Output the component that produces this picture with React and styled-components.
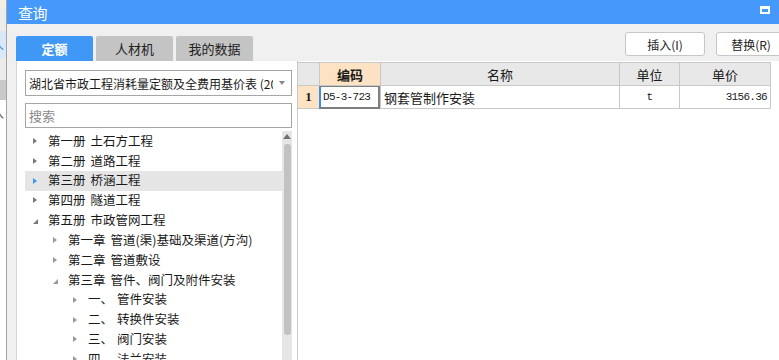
import React from 'react';
import styled, { createGlobalStyle, css } from 'styled-components';

const Global = createGlobalStyle`
  html, body {
    margin: 0;
    padding: 0;
    width: 779px;
    height: 360px;
    overflow: hidden;
    background: #fff;
  }
  * { box-sizing: border-box; }
`

const CJK = `"Noto Sans CJK SC", "Noto Sans", sans-serif`;
const MONO = `"Liberation Mono", "DejaVu Sans Mono", monospace`;

const Page = styled.div`
  display: flex;
  width: 779px;
  height: 360px;
  font-family: ${CJK};
  color: #1a1a1a;
`

const BackStrip = styled.div`
  width: 6px;
  display: flex;
  flex-direction: column;
  overflow: hidden;
`

const StripBlock = styled.div`
  height: ${p => p.h}px;
  background: ${p => p.bg};
  flex: ${p => p.grow ? 1 : 'none'};
  color: ${p => p.fg || '#555'};
  font-size: 12px;
  line-height: ${p => p.h}px;
  text-indent: -8px;
  white-space: nowrap;
  overflow: hidden;
`

const Dialog = styled.div`
  flex: 1;
  display: flex;
  flex-direction: column;
  border-left: 1px solid #a4a4a4;
  background: #f0f0f0;
  min-width: 0;
`

const TitleBar = styled.div`
  height: 24px;
  background: #4499fb;
  display: flex;
  align-items: center;
  justify-content: space-between;
  padding: 0 9px 0 11px;
  flex: none;
`

const Title = styled.span`
  color: #fff;
  font-size: 15px;
  letter-spacing: -0.5px;
`

const MaxIcon = styled.span`
  width: 10px;
  height: 8px;
  border: 2px solid #fff;
  border-top-width: 3px;
  margin-top: -5px;
`

const TopRow = styled.div`
  height: 37px;
  display: flex;
  justify-content: space-between;
  padding-left: 9px;
  flex: none;
`

const Tabs = styled.div`
  display: flex;
  align-items: flex-end;
  gap: 3px;
`

const Tab = styled.div`
  width: 77px;
  height: 25px;
  border-radius: 2px 2px 0 0;
  display: flex;
  align-items: center;
  justify-content: center;
  font-size: 13px;
  ${p => p.active ? css`
    background: #3f97f6;
    color: #fff;
    font-weight: bold;
  ` : css`
    background: #c4c4c4;
    color: #222;
  `}
`

const Buttons = styled.div`
  display: flex;
  gap: 11px;
  padding-top: 8px;
  margin-right: -7px;
`

const Button = styled.div`
  width: ${p => p.w}px;
  height: 24px;
  background: #fff;
  border: 1px solid #c6c6c6;
  border-radius: 3px;
  display: flex;
  align-items: center;
  justify-content: center;
  font-size: 12px;
  color: #222;
`

const Content = styled.div`
  flex: 1;
  display: flex;
  min-height: 0;
  padding-left: 9px;
`

const LeftPanel = styled.div`
  width: 281px;
  background: #fff;
  border-left: 1px solid #d6d6d6;
  padding: 9px 5px 0 8px;
  display: flex;
  flex-direction: column;
  flex: none;
`

const Select = styled.div`
  height: 26px;
  border: 1px solid #a6a6a6;
  display: flex;
  align-items: center;
  padding: 0 6px 0 3px;
  font-size: 12px;
  white-space: nowrap;
  overflow: hidden;
`

const SelectText = styled.span`
  flex: 1;
  overflow: hidden;
`

const Caret = styled.span`
  width: 0;
  height: 0;
  border-left: 3px solid transparent;
  border-right: 3px solid transparent;
  border-top: 4px solid #888;
  margin-left: 6px;
`

const Search = styled.div`
  height: 25px;
  margin-top: 7px;
  border: 1px solid #a6a6a6;
  display: flex;
  align-items: center;
  padding-left: 3px;
  font-size: 13px;
  color: #8a8a8a;
`

const TreeWrap = styled.div`
  flex: 1;
  display: flex;
  margin-top: 3px;
  min-height: 0;
`

const Tree = styled.div`
  flex: 1;
  overflow: hidden;
`

const Node = styled.div`
  height: 19.85px;
  display: flex;
  align-items: center;
  padding-left: ${p => 8 + p.level * 20}px;
  font-size: 12.5px;
  line-height: 1;
  white-space: nowrap;
  background: ${p => p.selected ? '#e5e5e5' : 'transparent'};
`

const Arrow = styled.span`
  width: 15px;
  flex: none;
  display: flex;
  align-items: center;
  ${p => p.open ? css`
    &::before {
      content: '';
      width: 0;
      height: 0;
      margin-top: 3px;
      border-left: 5px solid transparent;
      border-bottom: 5px solid ${p.level ? '#9a9a9a' : '#7a7a7a'};
    }
  ` : css`
    &::before {
      content: '';
      width: 0;
      height: 0;
      border-top: 3.5px solid transparent;
      border-bottom: 3.5px solid transparent;
      border-left: 4px solid ${p.selected ? '#3f97f6' : p.level ? '#9a9a9a' : '#7a7a7a'};
    }
  `}
`

const Label = styled.span`
  margin-right: 5px;
`

const ScrollBar = styled.div`
  width: 10px;
  background: #e6e6e6;
  display: flex;
  flex-direction: column;
  align-items: center;
  flex: none;
`

const ScrollUp = styled.span`
  margin-top: 3px;
  width: 0;
  height: 0;
  border-left: 4px solid transparent;
  border-right: 4px solid transparent;
  border-bottom: 5px solid #707070;
`

const Thumb = styled.div`
  width: 7px;
  height: 191px;
  margin-top: 5px;
  border-radius: 3px;
  background: #c2c2c2;
`

const TablePane = styled.div`
  flex: 1;
  background: #fff;
  border-left: 1px solid #c8c8c8;
  padding-top: 1px;
`

const Grid = styled.div`
  display: grid;
  grid-template-columns: 21px 61px 239px 60px 91px;
  width: 473px;
  border-right: 1px solid #c8c8c8;
`

const Cell = styled.div`
  height: ${p => p.head ? 24 : 23}px;
  border-bottom: 1px solid #c8c8c8;
  border-left: ${p => p.first ? 'none' : '1px solid #c8c8c8'};
  display: flex;
  align-items: center;
  font-size: 13px;
  white-space: nowrap;
  overflow: hidden;
  justify-content: ${p => p.align || 'center'};
  padding: ${p => p.pad || '0'};
  background: ${p => p.bg || '#fff'};
  ${p => p.head && css`border-top: 1px solid #c8c8c8;`}
  ${p => p.bold && css`font-weight: bold;`}
  ${p => p.active && css`
    border: 2px solid #7f7f7f;
    border-left: 2px solid #3c8ee8;
    border-top: 1px solid #7f7f7f;
  `}
`

const RowNum = styled.span`
  font-family: "Liberation Serif", serif;
  font-weight: bold;
  font-size: 13px;
`

const Mono = styled.span`
  font-family: ${MONO};
  font-size: 11px;
  letter-spacing: -0.7px;
`

const tree = [
  { level: 0, no: '第一册', name: '土石方工程' },
  { level: 0, no: '第二册', name: '道路工程' },
  { level: 0, no: '第三册', name: '桥涵工程', selected: true },
  { level: 0, no: '第四册', name: '隧道工程' },
  { level: 0, no: '第五册', name: '市政管网工程', open: true },
  { level: 1, no: '第一章', name: '管道(渠)基础及渠道(方沟)' },
  { level: 1, no: '第二章', name: '管道敷设' },
  { level: 1, no: '第三章', name: '管件、阀门及附件安装', open: true },
  { level: 2, no: '一、', name: '管件安装', wide: true },
  { level: 2, no: '二、', name: '转换件安装', wide: true },
  { level: 2, no: '三、', name: '阀门安装', wide: true },
  { level: 2, no: '四、', name: '法兰安装', wide: true },
];

const App = () => (
  <Page>
    <Global />
    <BackStrip>
      <StripBlock h={8} bg="#f3ede4" />
      <StripBlock h={23} bg="#ececec" />
      <StripBlock h={27} bg="#d9e8f8" fg="#3d7fc8">人</StripBlock>
      <StripBlock h={22} bg="#ebebeb" />
      <StripBlock h={20} bg="#c9c9c9" />
      <StripBlock h={25} bg="#fff">入</StripBlock>
      <StripBlock grow bg="#fff" />
    </BackStrip>
    <Dialog>
      <TitleBar>
        <Title>查询</Title>
        <MaxIcon />
      </TitleBar>
      <TopRow>
        <Tabs>
          <Tab active>定额</Tab>
          <Tab>人材机</Tab>
          <Tab>我的数据</Tab>
        </Tabs>
        <Buttons>
          <Button w={80}>插入(I)</Button>
          <Button w={70}>替换(R)</Button>
        </Buttons>
      </TopRow>
      <Content>
        <LeftPanel>
          <Select>
            <SelectText>湖北省市政工程消耗量定额及全费用基价表 (2018)</SelectText>
            <Caret />
          </Select>
          <Search>搜索</Search>
          <TreeWrap>
            <Tree>
              {tree.map((n, i) => (
                <Node key={i} level={n.level} selected={n.selected}>
                  <Arrow open={n.open} level={n.level} selected={n.selected} />
                  <Label style={n.wide ? { width: 29, marginRight: 0 } : undefined}>{n.no}</Label>
                  {n.name}
                </Node>
              ))}
            </Tree>
            <ScrollBar>
              <ScrollUp />
              <Thumb />
            </ScrollBar>
          </TreeWrap>
        </LeftPanel>
        <TablePane>
          <Grid>
            <Cell head first bg="#e8e8e8" />
            <Cell head bold bg="#fde3c3">编码</Cell>
            <Cell head bg="#e8e8e8">名称</Cell>
            <Cell head bg="#e8e8e8">单位</Cell>
            <Cell head bg="#e8e8e8">单价</Cell>

            <Cell first bg="#fde3c3"><RowNum>1</RowNum></Cell>
            <Cell active align="flex-start" pad="0 0 0 2px"><Mono>D5-3-723</Mono></Cell>
            <Cell align="flex-start" pad="0 0 0 3px">钢套管制作安装</Cell>
            <Cell><Mono>t</Mono></Cell>
            <Cell align="flex-end" pad="0 3px 0 0"><Mono>3156.36</Mono></Cell>
          </Grid>
        </TablePane>
      </Content>
    </Dialog>
  </Page>
);

export default App;
